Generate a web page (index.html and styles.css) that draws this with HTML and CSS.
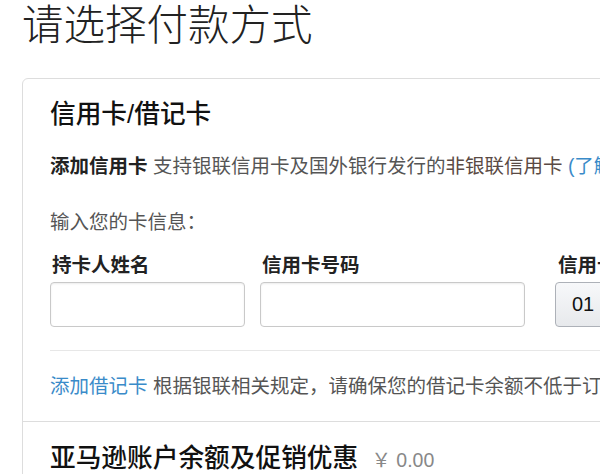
FILE: index.html
```html
<!DOCTYPE html>
<html lang="zh-CN">
<head>
    <meta charset="UTF-8">
    <title>请选择付款方式</title>
    <link rel="stylesheet" href="styles.css">
</head>
<body>
    <h1 class="page-title">请选择付款方式</h1>

    <div class="pay-box">
        <!-- 信用卡 / 借记卡 -->
        <div class="pay-section">
            <h2>信用卡/借记卡</h2>
            <p class="intro">
                <b>添加信用卡</b> 支持银联信用卡及国外银行发行的<span class="warn">非银联信用卡</span> <a href="#">(了解更多)</a>
            </p>
            <p class="hint">输入您的卡信息：</p>
            <div class="card-form">
                <div class="field name-field">
                    <label>持卡人姓名</label>
                    <input type="text">
                </div>
                <div class="field number-field">
                    <label>信用卡号码</label>
                    <input type="text">
                </div>
                <div class="field date-field">
                    <label>信用卡有效期</label>
                    <button class="month-btn">01</button>
                </div>
            </div>
            <div class="divider"></div>
            <p class="debit">
                <a href="#">添加借记卡</a> 根据银联相关规定，请确保您的借记卡余额不低于订单金额
            </p>
        </div>

        <!-- 账户余额 -->
        <div class="pay-section balance">
            <h2>亚马逊账户余额及促销优惠 <span class="amount">￥ 0.00</span></h2>
        </div>
    </div>
</body>
</html>
```

FILE: styles.css
```css
html, body {
    overflow: hidden;
}
body {
    margin: 0;
    padding: 0 0 0 22px;
    font-family: "Liberation Sans", "Noto Sans CJK SC", sans-serif;
    color: #111;
    background: white;
}
.page-title {
    margin: 0;
    height: 78px;
    font-size: 41.5px;
    line-height: 51px;
    font-weight: 300;
    color: #222;
    white-space: nowrap;
}
.pay-box {
    width: 700px;
    border: 1px solid #ddd;
    border-radius: 6px;
}
.pay-section {
    padding: 19px 0 23px 27px;
    white-space: nowrap;
}
.pay-section h2 {
    margin: 0;
    font-size: 25.7px;
    line-height: 32px;
    font-weight: 500;
    color: #111;
}
p {
    margin: 0;
    font-size: 19.5px;
    line-height: 24px;
    color: #555;
}
.intro {
    margin-top: 24px;
}
.intro b {
    color: #222;
}
.warn {
    color: #5a4a44;
}
a {
    color: #3a8bc9;
    text-decoration: none;
}
.hint {
    margin-top: 32px;
}
.card-form {
    display: flex;
    margin-top: 19px;
}
.field label {
    display: block;
    margin-left: 2px;
    font-size: 19.5px;
    line-height: 24px;
    font-weight: bold;
    color: #222;
}
.field input {
    display: block;
    box-sizing: border-box;
    margin-top: 5px;
    height: 45px;
    border: 1px solid #c9c9c9;
    border-radius: 4px;
    box-shadow: inset 0 1px 2px rgba(0, 0, 0, 0.08);
}
.name-field {
    margin-right: 15px;
}
.name-field input {
    width: 195px;
}
.number-field {
    margin-right: 30px;
}
.number-field input {
    width: 265px;
}
.date-field label {
    margin-left: 3px;
}
.month-btn {
    display: block;
    box-sizing: border-box;
    margin-top: 5px;
    width: 80px;
    height: 45px;
    padding: 0 0 0 16px;
    text-align: left;
    font-family: "Liberation Sans", sans-serif;
    font-size: 20px;
    color: #111;
    border: 1px solid #adb1b8;
    border-radius: 4px;
    background: linear-gradient(#f7f8fa, #e7e9ec);
}
.divider {
    margin-top: 23px;
    height: 1px;
    background: #e7e7e7;
}
.debit {
    margin-top: 23px;
}
.balance {
    border-top: 1px solid #ddd;
    padding-top: 20px;
}
.amount {
    margin-left: 6px;
    font-size: 19.5px;
    font-weight: normal;
    color: #888;
}
```
